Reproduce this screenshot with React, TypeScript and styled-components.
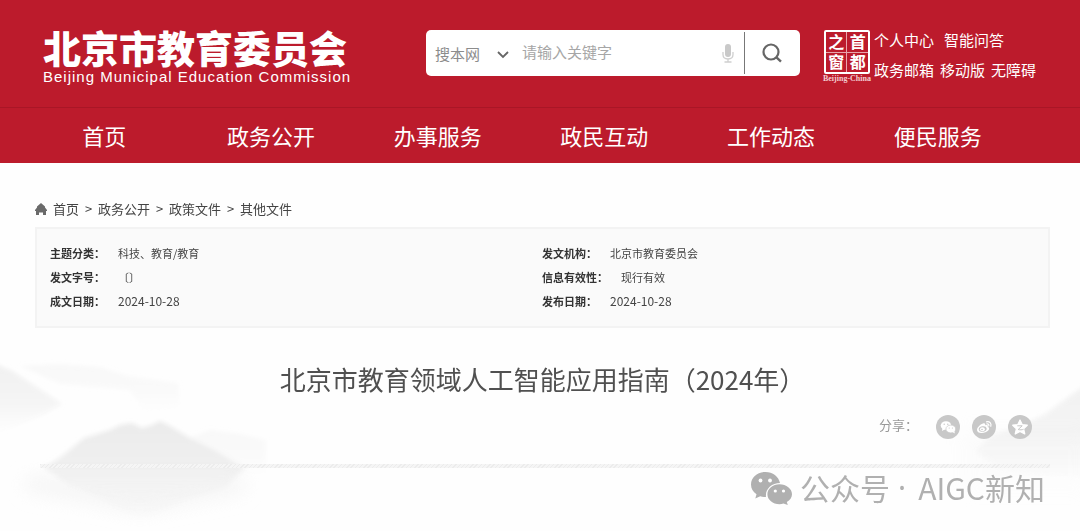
import React from "react";
import styled, { createGlobalStyle } from "styled-components";

const GlobalStyle = createGlobalStyle`
  *, *::before, *::after { box-sizing: border-box; }
  body {
    margin: 0;
    background: #fefefe;
    color: #444;
    font-family: "Noto Sans CJK SC", sans-serif;
  }
  a { color: inherit; text-decoration: none; }
  button, input, select { font-family: inherit; }
`;

const Header = styled.header`
  background: #bc1b2c;
  color: #fff;
`;

const TopBar = styled.div`
  display: flex;
  align-items: flex-start;
  height: 107px;
  padding: 30px 44px 0 43px;
`;

const Logo = styled.a`
  flex: none;
  width: 310px;
  white-space: nowrap;
`;

const LogoName = styled.span`
  display: block;
  font-size: 38px;
  font-weight: 900;
  line-height: 34px;
`;

const LogoLatin = styled.span`
  display: block;
  margin-top: 4px;
  font-family: "Liberation Sans", sans-serif;
  font-size: 15px;
  line-height: 18px;
  letter-spacing: 1px;
`;

const Search = styled.form`
  display: flex;
  align-items: center;
  flex: 1;
  min-width: 0;
  height: 46px;
  margin: 0 22px 0 73px;
  padding-left: 9px;
  background: #fff;
  border-radius: 5px;
`;

const Scope = styled.div`
  display: flex;
  align-items: center;
  flex: none;
  width: 87px;
  height: 46px;

  select {
    width: 100%;
    height: 46px;
    margin-right: -17px;
    padding: 0;
    border: 0;
    background: transparent;
    appearance: none;
    color: #8c8c8c;
    font-size: 15px;
  }
  svg { flex: none; margin: 4px 12px 0 0; pointer-events: none; }
`;

const Keyword = styled.input`
  flex: 1;
  min-width: 0;
  height: 42px;
  padding: 0 0 4px;
  border: 0;
  outline: 0;
  background: transparent;
  color: #444;
  font-size: 15px;
  &::placeholder { color: #a6a6a6; opacity: 1; }
`;

const IconButton = styled.button<{ $width: number; $divided?: boolean }>`
  display: flex;
  align-items: center;
  justify-content: center;
  flex: none;
  width: ${(p) => p.$width}px;
  height: 42px;
  padding: 0;
  border: 0;
  border-left: ${(p) => (p.$divided ? "1px solid #777" : "0")};
  background: transparent;
`;

const Seal = styled.a`
  display: flex;
  flex-direction: column;
  align-items: center;
  flex: none;
  width: 50px;
`;

const SealGrid = styled.span`
  display: grid;
  grid-template-columns: 1fr 1fr;
  gap: 1px;
  width: 46px;
  height: 44px;
  border: 2px solid #fff;
  border-radius: 2px;
  background: #e8a5ac;
`;

const SealChar = styled.span`
  display: flex;
  align-items: center;
  justify-content: center;
  background: #bc1b2c;
  font-size: 16px;
  font-weight: 700;
  line-height: 16px;
  padding-bottom: 2px;
`;

const SealLatin = styled.span`
  font-family: "Liberation Serif", serif;
  font-size: 8px;
  font-weight: 700;
  line-height: 10px;
  color: #f3cdd1;
`;

const QuickLinks = styled.nav`
  flex: none;
  margin-top: -5px;
  padding-left: 2px;
  font-size: 15px;
  line-height: 30px;
`;

const QuickRow = styled.div<{ $gap: number }>`
  display: flex;
  gap: ${(p) => p.$gap}px;
`;

const MainNav = styled.nav`
  display: grid;
  grid-template-columns: repeat(6, 1fr);
  height: 56px;
  padding: 0 59px 0 21px;
  border-top: 1px solid #a91626;
`;

const NavLink = styled.a`
  font-size: 22px;
  line-height: 54px;
  text-align: center;
  white-space: nowrap;
`;

const Page = styled.main`
  position: relative;
  padding: 31px 30px 24px 35px;
`;

const Landscape = styled.svg<{ $side: "left" | "right" }>`
  position: absolute;
  z-index: -1;
  top: 165px;
  ${(p) => p.$side}: 0;
`;

const Crumbs = styled.nav`
  display: flex;
  align-items: center;
  gap: 6px;
  height: 28px;
  font-size: 13px;
  color: #444;
  svg { margin-top: 2px; }
`;

const Separator = styled.span`
  width: 7px;
`;

const Info = styled.dl`
  display: grid;
  grid-template-columns: 1fr 1fr;
  margin: 5px 0 0;
  padding: 12px 14px 13px 13px;
  border: 2px solid #f3f3f3;
  background: #fafafa;
  font-size: 11px;
  line-height: 24px;
`;

const InfoItem = styled.div`
  display: flex;
  gap: 13px;
  dt { font-weight: 700; color: #333; }
  dd { margin: 0; }
  time { font-size: 12px; }
`;

const Title = styled.h1`
  margin: 31px 0 0;
  font-size: 26px;
  font-weight: 400;
  line-height: 40px;
  text-align: center;
  color: #505050;
`;

const Share = styled.div`
  display: flex;
  align-items: center;
  justify-content: flex-end;
  gap: 12px;
  margin-top: 16px;
  padding-right: 18px;
  color: #999;
  font-size: 13px;
  line-height: 18px;

  span { margin: 0 6px 4px 0; }
`;

const ShareButton = styled.button`
  width: 24px;
  height: 24px;
  padding: 0;
  border: 0;
  border-radius: 12px;
  background: #c8c8c8;
  svg { display: block; }
`;

const Rule = styled.hr`
  height: 4px;
  margin: 25px 0 0 5px;
  border: 0;
  background: repeating-linear-gradient(135deg, #ececec 0 1px, #f5f5f5 1px 3px);
`;

const Signature = styled.div`
  display: flex;
  align-items: center;
  justify-content: flex-end;
  gap: 8px;
  padding-right: 5px;
  color: #b0b0b0;
  font-size: 30px;
  line-height: 32px;
  white-space: nowrap;
  svg { margin-top: 4px; }
`;

const Dot = styled.span`
  padding: 2px 4px 0 0;
  font-family: "Noto Sans", sans-serif;
`;

const WeChatMark = () => (
  <svg width="41" height="33" viewBox="0 0 41 33" aria-hidden="true">
    <path
      fill="#b0b0b0"
      d="M14.5 0C6.500 0 0 5.500 0 12.500C0 16.500 2 20 5.500 22.300L4.300 26.500L9.200 24.200C11 24.800 13 25 15 25C14 17.200 20.500 11 29 11C27.700 4.500 21.700 0 14.500 0Z"
    />
    <path
      fill="#b0b0b0"
      d="M28.500 12.300C21.800 12.300 16.400 16.800 16.400 22.300C16.400 27.900 21.800 32.200 28.500 32.200C29.900 32.200 31.200 32 32.500 31.600L36.800 33L35.800 30C39 28.200 41 25.500 41 22.300C41 16.800 35.300 12.300 28.500 12.300Z"
    />
    <g fill="#fff">
      <circle cx="9.500" cy="8.500" r="1.900" />
      <circle cx="19" cy="8.500" r="1.900" />
      <circle cx="24.300" cy="19" r="1.600" />
      <circle cx="32.500" cy="19" r="1.600" />
    </g>
  </svg>
);

const WeChatShare = () => (
  <svg width="24" height="24" viewBox="0 0 24 24" aria-hidden="true">
    <ellipse cx="10" cy="10.500" rx="5.300" ry="4.300" fill="#fff" />
    <path d="M6.500 13L6 16L9.500 14Z" fill="#fff" />
    <ellipse cx="14.800" cy="14" rx="4.900" ry="3.900" fill="#fff" stroke="#c8c8c8" strokeWidth=".7" />
    <path d="M16.500 17L18.800 18.500L18.300 15.500Z" fill="#fff" />
    <g fill="#c8c8c8">
      <circle cx="8.200" cy="9.300" r=".7" />
      <circle cx="11.800" cy="9.300" r=".7" />
      <circle cx="13.200" cy="13" r=".6" />
      <circle cx="16.400" cy="13" r=".6" />
    </g>
  </svg>
);

const WeiboShare = () => (
  <svg width="24" height="24" viewBox="0 0 24 24" aria-hidden="true">
    <path
      fill="#fff"
      d="M11 8.500C12.500 7.800 13.600 8.400 13.200 10.200C15 9.600 16.300 10.100 15.700 11.700C17.500 12.300 17.600 14 16.200 15.500C14.300 17.600 10.600 18.500 7.800 17.700C4.800 16.900 4.300 14.500 6 12.200C7.400 10.300 9.300 9 11 8.500Z"
    />
    <ellipse cx="10.700" cy="14" rx="4" ry="2.700" fill="#c8c8c8" transform="rotate(-10 10.700 14)" />
    <ellipse cx="10.400" cy="14.200" rx="2.500" ry="2" fill="#fff" />
    <circle cx="10" cy="14.500" r=".8" fill="#c8c8c8" />
    <path d="M14.500 6.800C17.600 6.100 19.700 8.400 18.800 11.300M14.900 8.900C16.300 8.600 17.200 9.600 16.800 10.900" fill="none" stroke="#fff" strokeWidth="1.200" strokeLinecap="round" />
  </svg>
);

const QzoneShare = () => (
  <svg width="24" height="24" viewBox="0 0 24 24" aria-hidden="true">
    <path
      fill="#fff"
      stroke="#fff"
      strokeWidth="1.200"
      strokeLinejoin="round"
      d="M12 5L14.200 9.600L19.300 10.200L15.600 13.700L16.800 19L12 16.400L7.200 19L8.400 13.700L4.700 10.200L9.800 9.600Z"
    />
    <path d="M9.300 10.800H14.200L10.200 14.500C12 15 14 14.900 15.500 14.300" fill="none" stroke="#c8c8c8" strokeWidth="1" />
  </svg>
);

const navItems = ["首页", "政务公开", "办事服务", "政民互动", "工作动态", "便民服务"];
const crumbs = ["首页", "政务公开", "政策文件", "其他文件"];
const sealChars = ["之", "首", "窗", "都"];

const details: { label: string; value: React.ReactNode }[] = [
  { label: "主题分类：", value: "科技、教育/教育" },
  { label: "发文机构：", value: "北京市教育委员会" },
  { label: "发文字号：", value: "〔〕" },
  { label: "信息有效性：", value: "现行有效" },
  { label: "成文日期：", value: <time>2024-10-28</time> },
  { label: "发布日期：", value: <time>2024-10-28</time> },
];

export default function App() {
  return (
    <>
      <GlobalStyle />
      <Header>
        <TopBar>
          <Logo href="#">
            <LogoName>北京市教育委员会</LogoName>
            <LogoLatin>Beijing Municipal Education Commission</LogoLatin>
          </Logo>
          <Search role="search" onSubmit={(e) => e.preventDefault()}>
            <Scope>
              <select aria-label="搜索范围">
                <option>搜本网</option>
              </select>
              <svg width="14" height="10" viewBox="0 0 14 10" aria-hidden="true">
                <path d="M2 2L7 7L12 2" fill="none" stroke="#666" strokeWidth="1.800" />
              </svg>
            </Scope>
            <Keyword aria-label="关键字" placeholder="请输入关键字" />
            <IconButton type="button" $width={31} aria-label="语音输入">
              <svg width="12" height="19" viewBox="0 0 12 19" aria-hidden="true">
                <rect x="3" y="0" width="6" height="13" rx="3" fill="#c9c9c9" />
                <path d="M1 8V10.500C1 13.500 3 15 6 15S11 13.500 11 10.500V8M6 15V18M2.500 18H9.500" fill="none" stroke="#cfcfcf" strokeWidth="1.300" />
              </svg>
            </IconButton>
            <IconButton type="submit" $width={56} $divided aria-label="搜索">
              <svg width="20" height="20" viewBox="0 0 20 20" aria-hidden="true">
                <circle cx="9" cy="9" r="7.500" fill="none" stroke="#666" strokeWidth="2.200" />
                <path d="M14.200 14.200L19 18.700" stroke="#666" strokeWidth="2.400" />
              </svg>
            </IconButton>
          </Search>
          <Seal href="#">
            <SealGrid>
              {sealChars.map((c) => (
                <SealChar key={c}>{c}</SealChar>
              ))}
            </SealGrid>
            <SealLatin>Beijing-China</SealLatin>
          </Seal>
          <QuickLinks>
            <QuickRow $gap={10}>
              <a href="#">个人中心</a>
              <a href="#">智能问答</a>
            </QuickRow>
            <QuickRow $gap={6}>
              <a href="#">政务邮箱</a>
              <a href="#">移动版</a>
              <a href="#">无障碍</a>
            </QuickRow>
          </QuickLinks>
        </TopBar>
        <MainNav>
          {navItems.map((item) => (
            <NavLink key={item} href="#">
              {item}
            </NavLink>
          ))}
        </MainNav>
      </Header>

      <Page>
        <Landscape $side="left" width="290" height="203" viewBox="0 0 290 203" aria-hidden="true">
          <defs>
            <linearGradient id="mist" x1="0" y1="0" x2="0" y2="1">
              <stop offset="0" stopColor="#ebebeb" />
              <stop offset=".5" stopColor="#f0f0f0" />
              <stop offset="1" stopColor="#fdfdfd" />
            </linearGradient>
            <filter id="soft" x="-10%" y="-10%" width="120%" height="120%">
              <feGaussianBlur stdDeviation="2" />
            </filter>
            <filter id="haze" x="-20%" y="-40%" width="140%" height="180%">
              <feGaussianBlur stdDeviation="9" />
            </filter>
          </defs>
          <g fill="url(#mist)" filter="url(#soft)">
            <path d="M20 38L60 36L100 39L128 48L178 55L180 78L145 86L130 62L60 56Z" opacity=".3" />
            <path d="M185 112L210 102L240 106L266 112V150H190Z" opacity=".3" />
            <path d="M-5 36L12 43L30 55L50 68L62 76L40 88L-5 105Z" opacity=".75" />
            <path d="M44 140L62 128L84 110L110 102L120 97L132 95L142 100L152 97L160 93L170 98L190 110L215 122L245 140L225 160L190 170L150 188L125 184L100 170L70 158Z" />
          </g>
          <path d="M25 148H245V165L190 176L140 186L90 176L25 164Z" fill="#f2f2f2" filter="url(#haze)" opacity=".6" />
        </Landscape>
        <Landscape $side="right" width="180" height="203" viewBox="0 0 180 203" aria-hidden="true">
          <g fill="url(#mist)">
            <path d="M190 55L175 64L160 75L145 86L120 98L90 108L75 124L100 142L190 150Z" filter="url(#soft)" opacity=".65" />
            <path d="M60 100H190V170H60Z" filter="url(#haze)" opacity=".15" />
          </g>
        </Landscape>

        <Crumbs aria-label="当前位置">
          <svg width="12" height="12" viewBox="0 0 12 12" aria-hidden="true">
            <path d="M6 0L10 3.500V4.500H2V3.500ZM2 4.500H10L12 7V8H0V7ZM1 8H11V12H8V9.500H4V12H1Z" fill="#6a6a6a" />
          </svg>
          {crumbs.map((c, i) => (
            <React.Fragment key={c}>
              {i > 0 && <Separator>&gt;</Separator>}
              <a href="#">{c}</a>
            </React.Fragment>
          ))}
        </Crumbs>

        <Info>
          {details.map((d) => (
            <InfoItem key={d.label}>
              <dt>{d.label}</dt>
              <dd>{d.value}</dd>
            </InfoItem>
          ))}
        </Info>

        <Title>北京市教育领域人工智能应用指南（2024年）</Title>

        <Share>
          <span>分享：</span>
          <ShareButton aria-label="微信">
            <WeChatShare />
          </ShareButton>
          <ShareButton aria-label="微博">
            <WeiboShare />
          </ShareButton>
          <ShareButton aria-label="QQ空间">
            <QzoneShare />
          </ShareButton>
        </Share>

        <Rule />

        <Signature>
          <WeChatMark />
          <span>公众号</span>
          <Dot>·</Dot>
          <span>AIGC新知</span>
        </Signature>
      </Page>
    </>
  );
}
